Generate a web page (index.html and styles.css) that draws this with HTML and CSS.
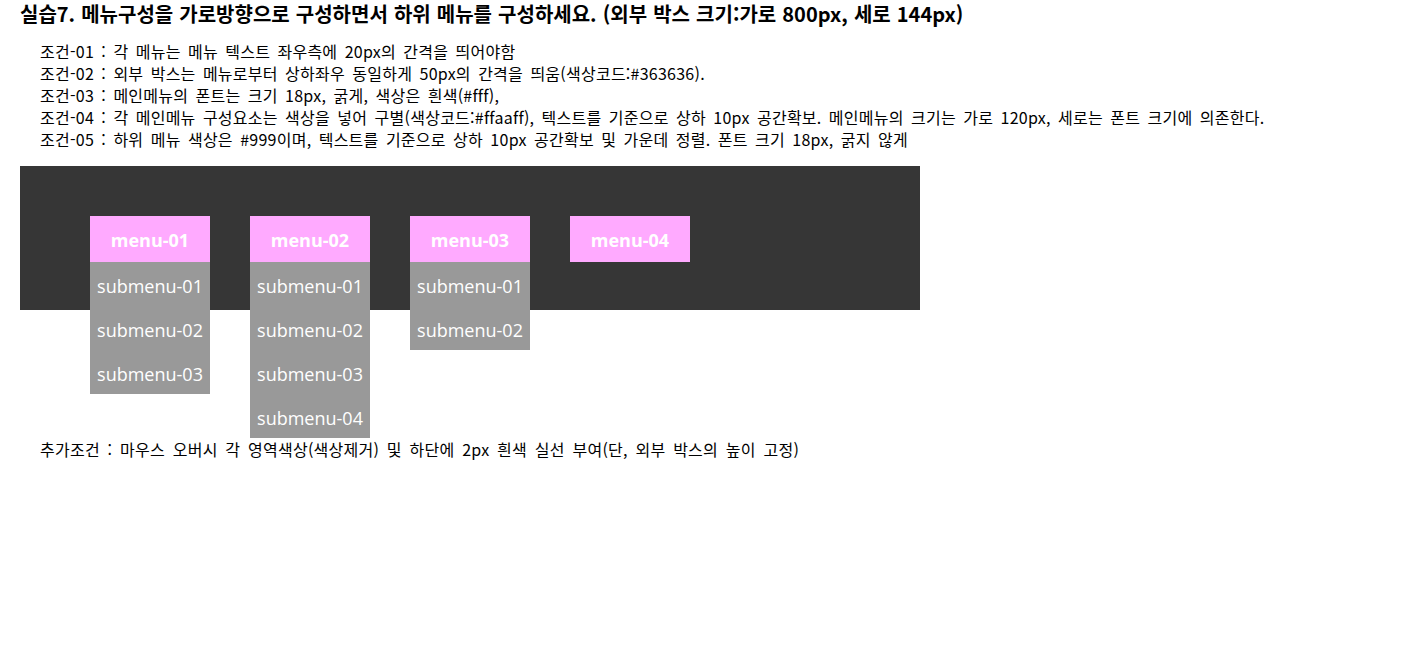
FILE: index.html
```html
<!DOCTYPE html>
<html lang="ko">
<head>
<meta charset="utf-8">
<title>실습7</title>
<link rel="stylesheet" href="styles.css">
</head>
<body>
<h1 class="title">실습7. 메뉴구성을 가로방향으로 구성하면서 하위 메뉴를 구성하세요. (외부 박스 크기:가로 800px, 세로 144px)</h1>
<ul class="conditions">
  <li>조건-01 : 각 메뉴는 메뉴 텍스트 좌우측에 20px의 간격을 띄어야함</li>
  <li>조건-02 : 외부 박스는 메뉴로부터 상하좌우 동일하게 50px의 간격을 띄움(색상코드:#363636).</li>
  <li>조건-03 : 메인메뉴의 폰트는 크기 18px, 굵게, 색상은 흰색(#fff),</li>
  <li>조건-04 : 각 메인메뉴 구성요소는 색상을 넣어 구별(색상코드:#ffaaff), 텍스트를 기준으로 상하 10px 공간확보. 메인메뉴의 크기는 가로 120px, 세로는 폰트 크기에 의존한다.</li>
  <li>조건-05 : 하위 메뉴 색상은 #999이며, 텍스트를 기준으로 상하 10px 공간확보 및 가운데 정렬. 폰트 크기 18px, 굵지 않게</li>
</ul>
<nav class="box">
  <ul class="menu">
    <li class="menu-item">
      <a class="menu-link" href="#">menu-01</a>
      <ul class="sub">
        <li><a href="#">submenu-01</a></li>
        <li><a href="#">submenu-02</a></li>
        <li><a href="#">submenu-03</a></li>
      </ul>
    </li>
    <li class="menu-item">
      <a class="menu-link" href="#">menu-02</a>
      <ul class="sub">
        <li><a href="#">submenu-01</a></li>
        <li><a href="#">submenu-02</a></li>
        <li><a href="#">submenu-03</a></li>
        <li><a href="#">submenu-04</a></li>
      </ul>
    </li>
    <li class="menu-item">
      <a class="menu-link" href="#">menu-03</a>
      <ul class="sub">
        <li><a href="#">submenu-01</a></li>
        <li><a href="#">submenu-02</a></li>
      </ul>
    </li>
    <li class="menu-item">
      <a class="menu-link" href="#">menu-04</a>
    </li>
  </ul>
</nav>
<p class="extra">추가조건 : 마우스 오버시 각 영역색상(색상제거) 및 하단에 2px 흰색 실선 부여(단, 외부 박스의 높이 고정)</p>
</body>
</html>
```
FILE: styles.css
```css
* { box-sizing: border-box; }
body {
  margin: 0;
  padding: 0 20px;
  font-family: "Noto Sans CJK KR", sans-serif;
  color: #000;
  background: #fff;
}
.title {
  margin: 0;
  padding-top: 2px;
  font-size: 20px;
  line-height: 24px;
  font-weight: bold;
  word-spacing: 0.5px;
}
.conditions {
  list-style: none;
  margin: 14px 0 0;
  padding: 0 0 0 20px;
  font-size: 16px;
  line-height: 22px;
  letter-spacing: 0.25px;
  word-spacing: 2.6px;
}
.box {
  margin-top: 16px;
  width: 900px;
  height: 144px;
  padding: 50px;
  background: #363636;
}
.menu {
  list-style: none;
  margin: 0;
  padding: 0;
  display: flex;
  align-items: flex-start;
}
.menu-item {
  width: 120px;
  margin: 0 20px;
}
.menu-link {
  display: block;
  background: #ffaaff;
  color: #fff;
  font-family: "Open Sans", sans-serif;
  font-size: 18px;
  font-weight: bold;
  line-height: 26px;
  padding: 11px 0 9px;
  text-align: center;
  text-decoration: none;
}
.sub {
  list-style: none;
  margin: 0;
  padding: 0;
  background: #999;
}
.sub a {
  display: block;
  color: #fff;
  font-family: "Open Sans", sans-serif;
  font-size: 18px;
  line-height: 24px;
  padding: 12px 0 8px;
  text-align: center;
  text-decoration: none;
}
.extra {
  margin: 128px 0 0;
  padding-left: 20px;
  font-size: 16px;
  line-height: 22px;
  letter-spacing: 0.25px;
  word-spacing: 3px;
}
```
